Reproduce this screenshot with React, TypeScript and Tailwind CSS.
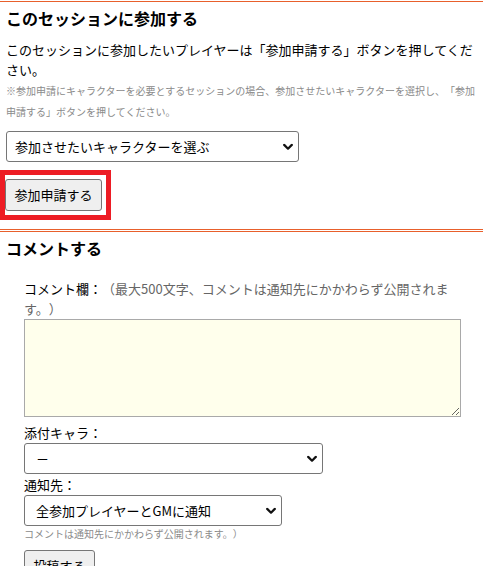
import React from 'react';

const Chevron: React.FC = () => (
  <svg
    className="pointer-events-none absolute right-[6px] top-1/2 -translate-y-1/2"
    width="10"
    height="7"
    viewBox="0 0 10 7"
    fill="none"
  >
    <path d="M1.2 1.4 5 5.2 8.8 1.4" stroke="#111" strokeWidth="2.2" strokeLinecap="round" strokeLinejoin="round" />
  </svg>
);

const Select: React.FC<{ width: string; pad: string; value: string }> = ({ width, pad, value }) => (
  <div className={`relative ${width}`}>
    <select
      defaultValue={value}
      className={`block h-[31px] w-full appearance-none rounded-[3px] border border-[#767676] bg-white ${pad} pr-6 text-[13px] leading-[29px] text-black`}
    >
      <option value={value}>{value}</option>
    </select>
    <Chevron />
  </div>
);

const App: React.FC = () => {
  return (
    <div className="mt-px bg-white text-[13px] text-black [font-family:'Noto_Sans_CJK_JP',sans-serif] [text-spacing-trim:space-all]">
      <section className="border-y border-[#e8602c] px-[6px] pb-[9px]">
        <h2 className="mt-[4px] text-[16px] font-bold leading-[24px]">このセッションに参加する</h2>
        <p className="mt-[10px] leading-[20px]">
          このセッションに参加したいプレイヤーは「参加申請する」ボタンを押してください。
        </p>
        <p className="text-[10px] leading-[21px] text-[#8a8a8a]">
          ※参加申請にキャラクターを必要とするセッションの場合、参加させたいキャラクターを選択し、「参加申請する」ボタンを押してください。
        </p>
        <div className="mt-[9px]">
          <Select width="w-[293px]" pad="pl-[8px]" value="参加させたいキャラクターを選ぶ" />
        </div>
        <div className="-ml-[6px] mt-[8px] w-[111px] border-[5px] border-[#ed1c24] py-[4px] pr-[4px]">
          <button className="h-[32px] w-[97px] rounded-[3px] border border-[#767676] bg-[#efefef] text-[13px] leading-[30px]">
            参加申請する
          </button>
        </div>
      </section>

      <section className="mt-px border-t border-[#e8602c] px-[6px]">
        <h2 className="mt-[4px] text-[16px] font-bold leading-[24px]">コメントする</h2>
        <div className="ml-[18px] mt-[19px] w-[437px]">
          <div className="leading-[20px]">
            コメント欄：<span className="text-[#666]">（最大500文字、コメントは通知先にかかわらず公開されます。）</span>
          </div>
          <textarea className="block h-[98px] w-full resize border border-[#a9a9a9] bg-[#ffffec]" />
          <div className="mt-[6px] leading-[20px]">添付キャラ：</div>
          <Select width="w-[299px]" pad="pl-[11px]" value="－" />
          <div className="mt-px leading-[20px]">通知先：</div>
          <Select width="w-[258px]" pad="pl-[11px]" value="全参加プレイヤーとGMに通知" />
          <p className="text-[10px] leading-[16px] text-[#8a8a8a]">コメントは通知先にかかわらず公開されます。）</p>
          <button className="mt-[8px] h-[32px] w-[71px] rounded-[3px] border border-[#767676] bg-[#efefef] text-[13px] leading-[30px]">
            投稿する
          </button>
        </div>
      </section>
    </div>
  );
};

export default App;
